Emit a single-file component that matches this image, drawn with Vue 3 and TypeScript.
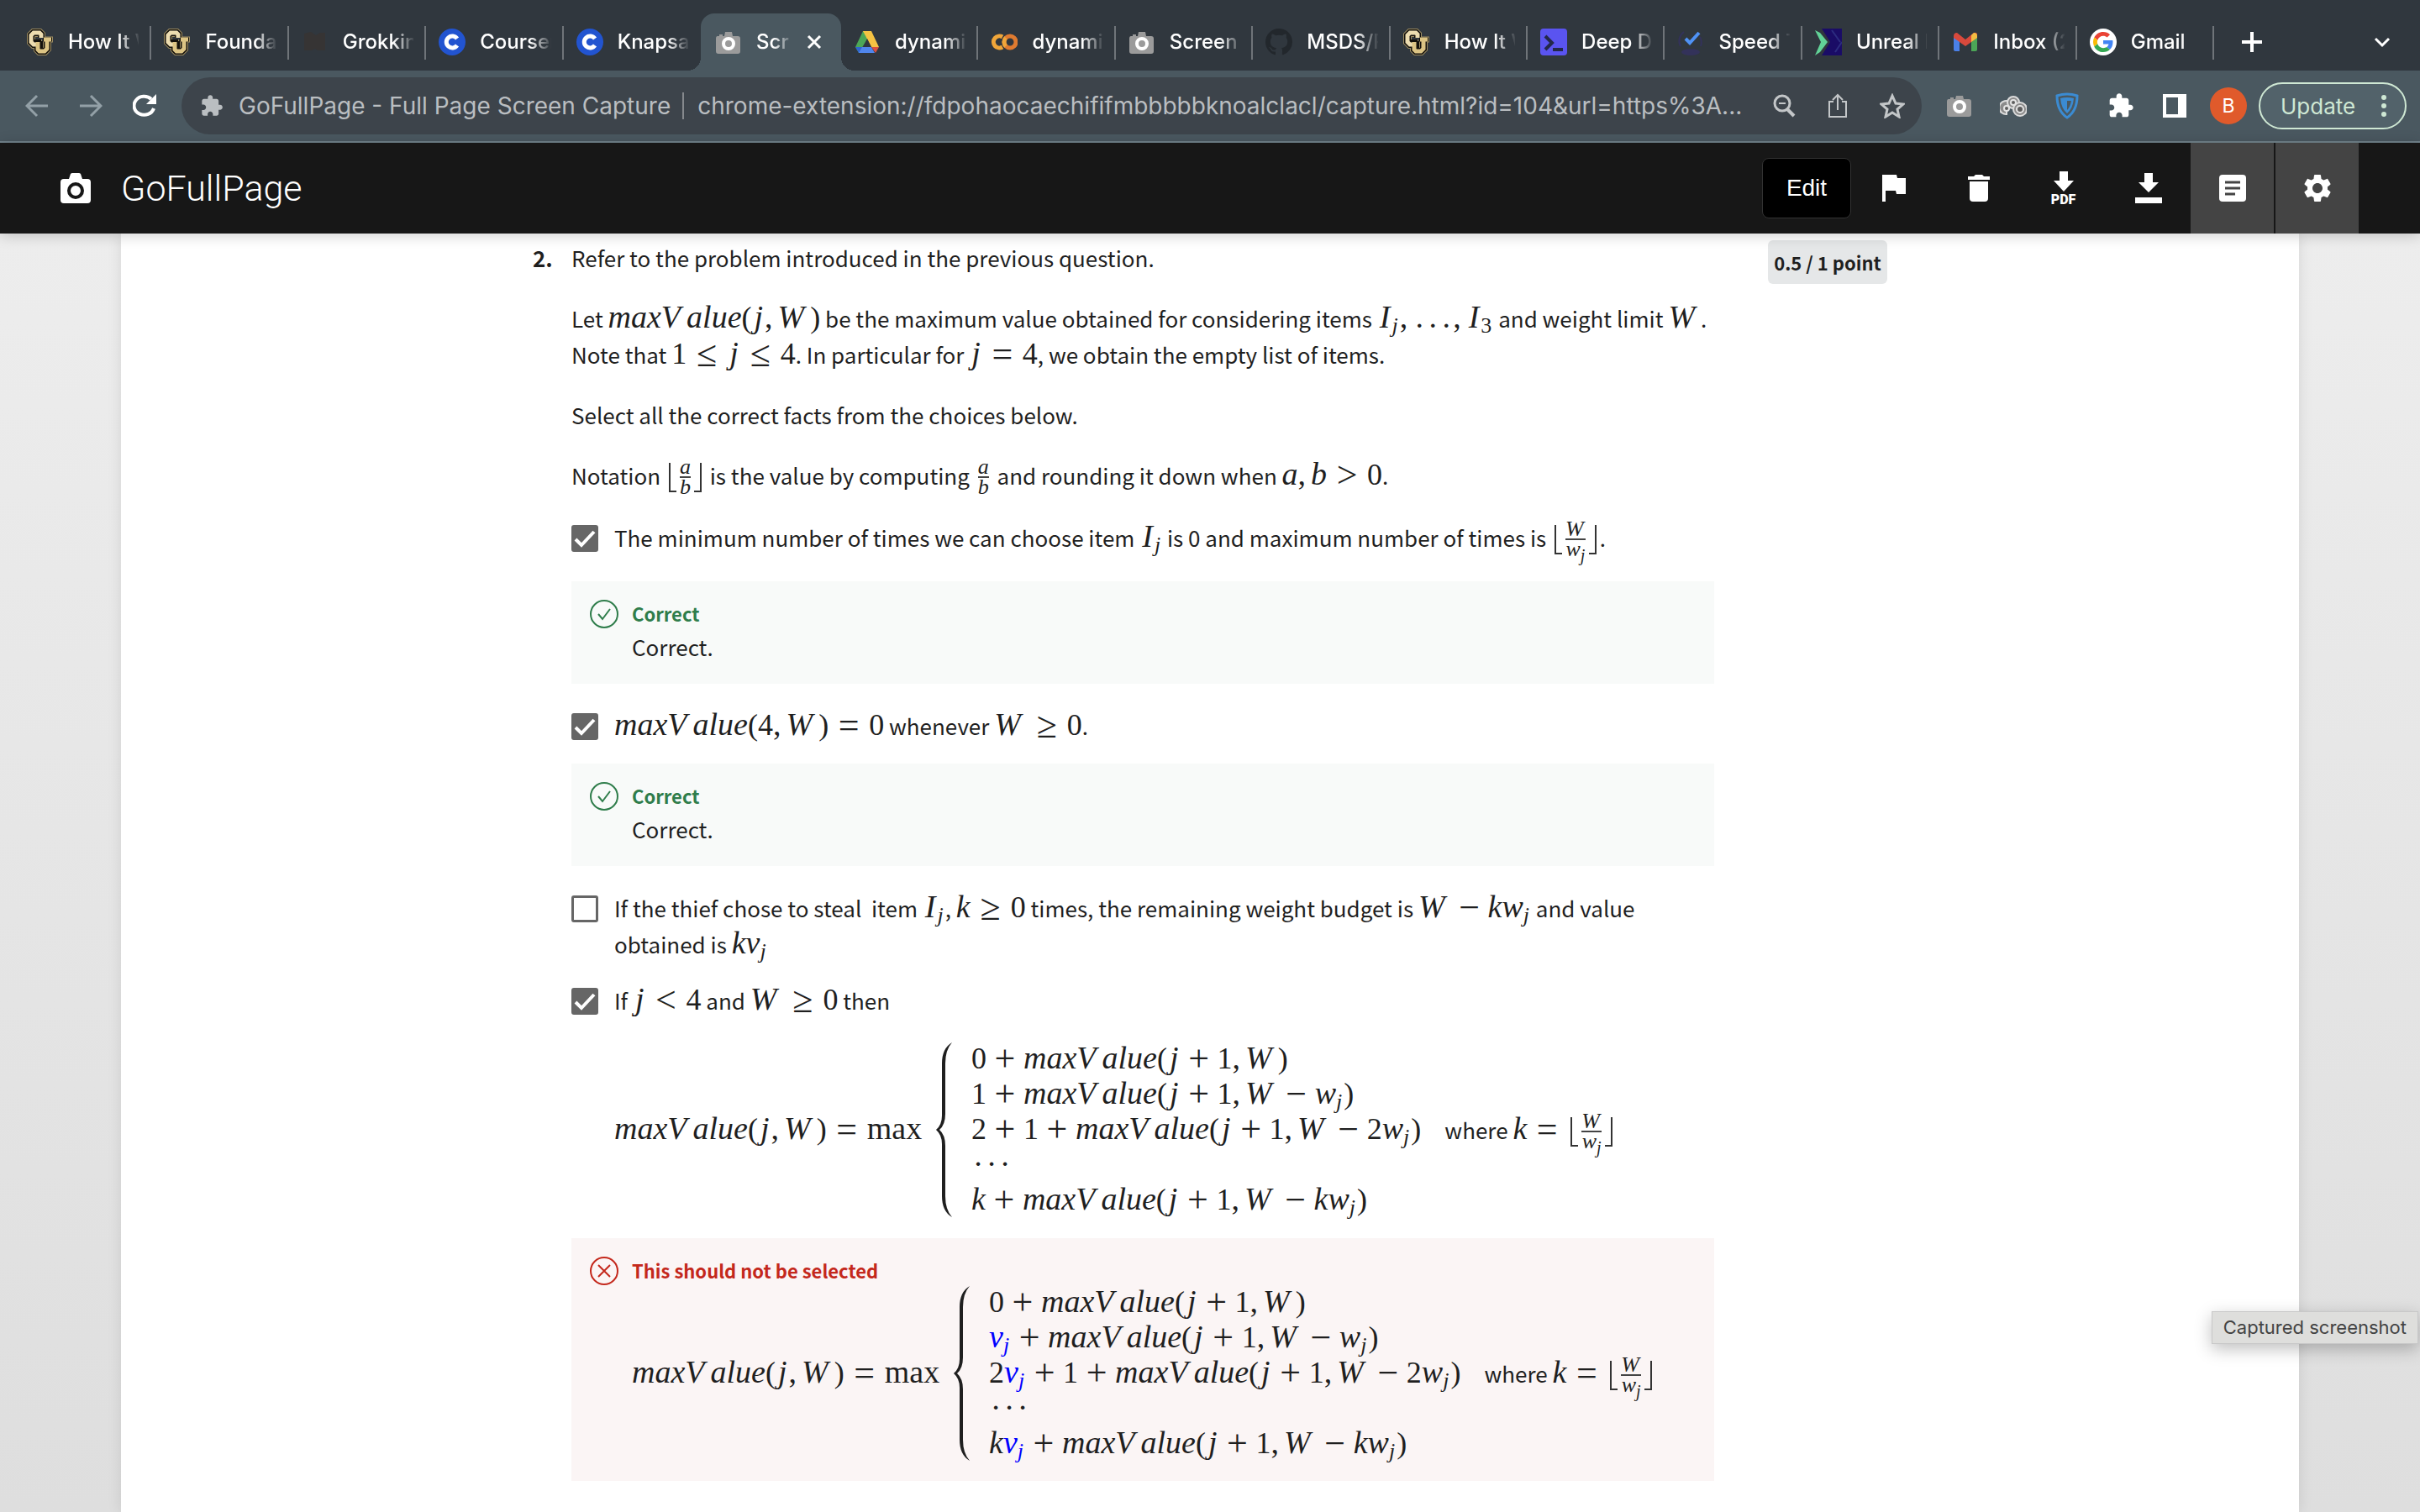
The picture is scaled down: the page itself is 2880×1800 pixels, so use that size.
<script setup lang="ts">
import { h, ref, type FunctionalComponent, type VNode } from 'vue'

interface Tab {
  title: string
  icon: string
  active?: boolean
}

const tabs: Tab[] = [
  { title: 'How It W', icon: 'cu' },
  { title: 'Foundat', icon: 'cu' },
  { title: 'Grokkin', icon: 'grok' },
  { title: 'Courser', icon: 'coursera' },
  { title: 'Knapsa', icon: 'coursera' },
  { title: 'Scr', icon: 'camera', active: true },
  { title: 'dynamic', icon: 'drive' },
  { title: 'dynamic', icon: 'colab' },
  { title: 'Screen', icon: 'camera' },
  { title: 'MSDS/P', icon: 'github' },
  { title: 'How It W', icon: 'cu' },
  { title: 'Deep D', icon: 'terminal' },
  { title: 'Speed T', icon: 'check' },
  { title: 'Unreal E', icon: 'unreal' },
  { title: 'Inbox (2', icon: 'gmail' },
  { title: 'Gmail', icon: 'google' },
]

const url = ref('chrome-extension://fdpohaocaechififmbbbbbknoalclacl/capture.html?id=104&url=https%3A...')
const picked = ref([true, true, false, true])

const puzzle =
  'M20.5 11H19V7c0-1.1-.9-2-2-2h-4V3.5C13 2.12 11.88 1 10.5 1S8 2.12 8 3.5V5H4c-1.1 0-1.99.9-1.99 2v3.8H3.5c1.49 0 2.7 1.21 2.7 2.7s-1.21 2.7-2.7 2.7H2V20c0 1.1.9 2 2 2h3.8v-1.5c0-1.49 1.21-2.7 2.7-2.7 1.49 0 2.7 1.21 2.7 2.7V22H17c1.1 0 2-.9 2-2v-4h1.5c1.38 0 2.5-1.12 2.5-2.5S21.88 11 20.5 11z'

// Small formula notation: letters are italic, _x is a subscript,
// [a/b] a fraction, ⌊a/b⌋ a floored fraction, {..} a highlighted part.
const tokenRe =
  /⌊(.+?)\/(.+?)⌋|\[(.+?)\/(.+?)\]|\{(.+?)\}|(\\max)|_(.)|([=≤≥<>])|([+−])|(,)|([.·])|([VW])|([jI])|([a-zA-Z])|([\d()]+)/g

function frac(a: string, b: string): VNode {
  return h('span', { class: 'frac' }, [
    h('span', { class: 'num' }, parse(a)),
    h('span', { class: 'den' }, parse(b)),
  ])
}

function parse(src: string): VNode[] {
  const out: VNode[] = []
  for (const m of src.matchAll(tokenRe)) {
    if (m[1]) out.push(h('span', { class: 'floor' }, [frac(m[1], m[2])]))
    else if (m[3]) out.push(frac(m[3], m[4]))
    else if (m[5]) out.push(h('span', { class: 'hot' }, parse(m[5])))
    else if (m[6]) out.push(h('span', 'max'))
    else if (m[7]) out.push(h('sub', /\d/.test(m[7]) ? m[7] : [h('i', m[7])]))
    else if (m[8]) out.push(h('span', { class: 'rel' }, m[8]))
    else if (m[9]) out.push(h('span', { class: 'bin' }, m[9]))
    else if (m[10]) out.push(h('span', { class: 'comma' }, ','))
    else if (m[11]) out.push(h('span', { class: 'dot' }, m[11]))
    else if (m[12]) out.push(h('i', { class: 'cap' }, m[12]))
    else if (m[13]) out.push(h('i', { class: 'slim' }, m[13]))
    else if (m[14]) out.push(h('i', m[14]))
    else out.push(h('span', { class: 'rm' }, m[0]))
  }
  return out
}

const Tex: FunctionalComponent<{ f: string }> = (props) => h('span', { class: 'math' }, parse(props.f))
Tex.props = ['f']

const casesA = ['0+maxValue(j+1,W)', '1+maxValue(j+1,W−w_j)', '2+1+maxValue(j+1,W−2w_j)', '···', 'k+maxValue(j+1,W−kw_j)']
const casesB = ['0+maxValue(j+1,W)', '{v_j}+maxValue(j+1,W−w_j)', '2{v_j}+1+maxValue(j+1,W−2w_j)', '···', 'k{v_j}+maxValue(j+1,W−kw_j)']
</script>

<template>
  <div class="window">
    <nav class="tabstrip" aria-label="Tabs">
      <div class="tabs">
        <div v-for="(t, i) in tabs" :key="i" class="tab" :class="{ active: t.active, bare: i === 4 }">
          <svg class="fav" viewBox="0 0 32 32" aria-hidden="true">
            <g v-if="t.icon === 'cu'" fill="none">
              <g stroke="#9c8c62" stroke-width="10"><path d="M17 10V7l-2-2H8L5 8v8l3 3h5" /><path d="M13 13v12l2 2h6l3-3V12" /><path d="M20 13h11" stroke-width="7" /></g>
              <g stroke="#14110c" stroke-width="8"><path d="M17 11V7l-2-2H8L5 8v8l3 3h5" /><path d="M13 13v12l2 2h6l3-3V12" /><path d="M19 13h11" stroke-width="5" /></g>
              <path stroke="#ecdcb0" stroke-width="5" d="M17 11V7l-2-2H8L5 8v8l3 3h4" />
              <path stroke="#dcc484" stroke-width="5" d="M13 16v9l2 2h6l3-3V13M20 13h9" />
              <path stroke="#14110c" stroke-width="2" d="M10 15h6M18 15v8" />
            </g>
            <path v-else-if="t.icon === 'grok'" fill="#363434" d="M3 6l8-2 6 4 5-3h6v21h-9l-3-2-4 2H3z" />
            <g v-else-if="t.icon === 'coursera'">
              <circle cx="16" cy="16" r="16" fill="#2254d0" />
              <path d="M22 12a7 7 0 1 0 0 8" fill="none" stroke="#fff" stroke-width="5" />
            </g>
            <g v-else-if="t.icon === 'camera'">
              <path fill="#9b9b9b" d="M3 9h2V7h4v2h2l1-5h8l1 5h6q3 0 3 3v15q0 3-3 3H4q-3 0-3-3V12q0-3 2-3z" />
              <circle cx="16" cy="18" r="6" fill="#9b9b9b" stroke="#fff" stroke-width="4" />
            </g>
            <g v-else-if="t.icon === 'drive'">
              <path fill="#4ca657" d="M11 3h5l3 5L6 29 2 22z" />
              <path fill="#f5c343" d="M11 3h10l9 19H21z" />
              <path fill="#2f64d0" d="M2 22h9l-4 7H6z" />
              <path fill="#5086ec" d="M10 22h11l4 7H6z" />
              <path fill="#d95040" d="M21 22h9l-4 7z" />
              <path fill="#30373e" d="M16 12l5 10H11z" />
            </g>
            <g v-else-if="t.icon === 'colab'" fill="none" stroke-width="5">
              <path stroke="#f0a63a" d="M14 10a7 7 0 1 0 0 12" />
              <circle cx="23" cy="16" r="7" stroke="#e07b30" />
              <path stroke="#f0a63a" d="M18 11a7 7 0 0 0 0 10" />
            </g>
            <path v-else-if="t.icon === 'github'" fill="#22272c" transform="scale(2)" d="M8 0C3.58 0 0 3.58 0 8c0 3.54 2.29 6.53 5.47 7.59.4.07.55-.17.55-.38 0-.19-.01-.82-.01-1.49-2.01.37-2.53-.49-2.69-.94-.09-.23-.48-.94-.82-1.13-.28-.15-.68-.52-.01-.53.63-.01 1.08.58 1.23.82.72 1.21 1.87.87 2.33.66.07-.52.28-.87.51-1.07-1.78-.2-3.64-.89-3.64-3.95 0-.87.31-1.59.82-2.15-.08-.2-.36-1.02.08-2.12 0 0 .67-.21 2.2.82.64-.18 1.32-.27 2-.27s1.36.09 2 .27c1.53-1.04 2.2-.82 2.2-.82.44 1.1.16 1.92.08 2.12.51.56.82 1.27.82 2.15 0 3.07-1.87 3.75-3.65 3.95.29.25.54.73.54 1.48 0 1.07-.01 1.93-.01 2.2 0 .21.15.46.55.38A8.01 8.01 0 0 0 16 8c0-4.42-3.58-8-8-8z" />
            <g v-else-if="t.icon === 'terminal'">
              <rect width="32" height="32" rx="4" fill="#5a54f0" />
              <path d="M6 9l8 8-8 8M15 25h12" fill="none" stroke="#23284a" stroke-width="4" />
            </g>
            <g v-else-if="t.icon === 'check'">
              <path d="M8 4a13 13 0 0 0-4 17M27 10a13 13 0 0 1 1 11" fill="none" stroke="#33325a" stroke-width="2" />
              <ellipse cx="16" cy="28" rx="11" ry="4" fill="#33325a" />
              <path d="M10 12l5 5L26 5" fill="none" stroke="#4f92f5" stroke-width="4" />
            </g>
            <g v-else-if="t.icon === 'unreal'">
              <path fill="#1a0c66" d="M8 0h24v32H8l10-16z" />
              <path fill="#62d297" d="M0 2l6 3 9 11-9 12-6 4 7-16z" />
              <path d="M20 2l10 14M32 16l-8 12" stroke="#2c2c80" stroke-width="2" />
            </g>
            <g v-else-if="t.icon === 'gmail'">
              <path fill="#4a80e8" d="M2 10l7 5v12H4q-2 0-2-2z" />
              <path fill="#4ca657" d="M30 10l-7 5v12h5q2 0 2-2z" />
              <path fill="#d8493c" d="M2 9q0-4 4-4l10 8 10-8q2-1 4 1v5l-14 10L2 11z" />
              <path fill="#f2bd42" d="M23 8l3-3q4 0 4 4v2l-7 5z" />
            </g>
            <g v-else>
              <circle cx="16" cy="16" r="16" fill="#fff" />
              <g transform="translate(4 4) scale(.5)">
                <path fill="#ea4335" d="M24 9.500c3.540 0 6.710 1.220 9.210 3.600l6.850-6.850C35.900 2.380 30.470 0 24 0 14.620 0 6.510 5.380 2.560 13.220l7.980 6.190C12.430 13.720 17.740 9.500 24 9.500z" />
                <path fill="#4285f4" d="M46.980 24.550c0-1.570-.15-3.090-.38-4.550H24v9.020h12.940c-.58 2.960-2.260 5.480-4.780 7.180l7.730 6c4.510-4.180 7.090-10.360 7.090-17.650z" />
                <path fill="#fbbc05" d="M10.530 28.590c-.48-1.450-.76-2.990-.76-4.590s.27-3.140.76-4.590l-7.980-6.190C.92 16.460 0 20.120 0 24c0 3.880.92 7.540 2.560 10.780l7.970-6.190z" />
                <path fill="#34a853" d="M24 48c6.480 0 11.930-2.130 15.890-5.810l-7.730-6c-2.150 1.450-4.920 2.300-8.160 2.300-6.260 0-11.570-4.220-13.470-9.910l-7.980 6.190C6.510 42.620 14.620 48 24 48z" />
              </g>
            </g>
          </svg>
          <span class="tab-title">{{ t.title }}</span>
          <button v-if="t.active" class="plain" aria-label="Close tab">
            <svg width="18" height="18" viewBox="0 0 18 18"><path d="M2 2l14 14M16 2L2 16" stroke="#fff" stroke-width="3" /></svg>
          </button>
        </div>
      </div>
      <div class="strip-end">
        <button class="plain" aria-label="New tab">
          <svg width="24" height="24" viewBox="0 0 24 24"><path d="M12 0v24M0 12h24" stroke="#fff" stroke-width="4" /></svg>
        </button>
        <button class="plain" aria-label="Search tabs">
          <svg width="20" height="14" viewBox="0 0 20 14"><path d="M2 3l8 8 8-8" fill="none" stroke="#fff" stroke-width="3" /></svg>
        </button>
      </div>
    </nav>

    <div class="toolbar">
      <div class="nav-buttons">
        <button class="plain" aria-label="Back">
          <svg width="28" height="28" viewBox="0 0 28 28" fill="none" stroke="#93a0a7" stroke-width="3"><path d="M27 14H3M14 2L2 14l12 12" /></svg>
        </button>
        <button class="plain" aria-label="Forward">
          <svg width="28" height="28" viewBox="0 0 28 28" fill="none" stroke="#93a0a7" stroke-width="3"><path d="M1 14h24M14 2l12 12-12 12" /></svg>
        </button>
        <button class="plain" aria-label="Reload">
          <svg width="28" height="28" viewBox="0 0 28 28"><path d="M25 17a12 11 0 1 1-3-11" fill="none" stroke="#fff" stroke-width="4" /><path d="M28 0v12H16z" fill="#fff" /></svg>
        </button>
      </div>
      <div class="omnibox">
        <svg width="28" height="28" viewBox="0 0 24 24" fill="#babec1"><path :d="puzzle" /></svg>
        <span class="ext-name">GoFullPage - Full Page Screen Capture</span>
        <input v-model="url" class="url" aria-label="Address" />
        <button class="plain" aria-label="Zoom">
          <svg width="28" height="28" viewBox="0 0 28 28" fill="none" stroke="#c3c6c8" stroke-width="3"><circle cx="12" cy="11" r="9" /><path d="M18 18l8 8" stroke-width="4" /><path d="M8 11h8" stroke-width="2" /></svg>
        </button>
        <button class="plain" aria-label="Share">
          <svg width="28" height="30" viewBox="0 0 28 30" fill="none" stroke="#c3c6c8" stroke-width="2"><path d="M9 10H4v18h20V10h-5M14 20V3M8 8l6-6 6 6" /></svg>
        </button>
        <button class="plain" aria-label="Bookmark">
          <svg width="30" height="30" viewBox="0 0 30 30" fill="none" stroke="#c3c6c8" stroke-width="3"><path d="M15 3l4 9 9 1-7 6 2 9-8-5-8 5 2-9-7-6 9-1z" /></svg>
        </button>
      </div>
      <div class="extensions">
        <button class="plain" aria-label="GoFullPage">
          <svg width="32" height="32" viewBox="0 0 32 32"><path fill="#9b9b9b" d="M3 8h2V6h4v2h2l1-4h8l1 4h6q3 0 3 3v15q0 3-3 3H4q-3 0-3-3V11q0-3 2-3z" /><circle cx="16" cy="17" r="6" fill="#9b9b9b" stroke="#fff" stroke-width="4" /></svg>
        </button>
        <button class="plain" aria-label="Extension">
          <svg width="32" height="32" viewBox="0 0 32 32" fill="none">
            <g fill="#8b8b8b" stroke="#dcdcdc" stroke-width="2"><path d="M8 26A8 8 0 1 1 15 16L8 19z" /><circle cx="16" cy="12" r="7" /><circle cx="24" cy="20" r="8" /></g>
            <g fill="#5d5d5d" stroke="#e4e4e4" stroke-width="2"><circle cx="16" cy="12" r="3" /><circle cx="24" cy="20" r="4" /><circle cx="8" cy="19" r="3" /></g>
          </svg>
        </button>
        <button class="plain" aria-label="Shield">
          <svg width="28" height="32" viewBox="0 0 28 32" fill="none" stroke="#3b8bd2" stroke-width="3"><path d="M14 2q6 0 12 2 0 18-12 26Q2 22 2 4q6-2 12-2z" /><path fill="#3b8bd2" fill-rule="evenodd" stroke="none" d="M14 6q4 0 8 1-1 12-8 18Q7 19 6 7q4-1 8-1zM14 10v11q4-4 5-11z" /></svg>
        </button>
        <button class="plain" aria-label="Extensions">
          <svg width="32" height="32" viewBox="0 0 24 24" fill="#fff"><path :d="puzzle" /></svg>
        </button>
        <button class="plain" aria-label="Side panel">
          <svg width="28" height="28" viewBox="0 0 28 28"><path fill="#fff" fill-rule="evenodd" d="M0 0h28v28H0zM4 4v20h14V4z" /></svg>
        </button>
        <button class="avatar">B</button>
      </div>
      <button class="update">
        Update
        <svg width="6" height="28" viewBox="0 0 6 28" fill="#cfe8d4"><circle cx="3" cy="4" r="3" /><circle cx="3" cy="14" r="3" /><circle cx="3" cy="24" r="3" /></svg>
      </button>
    </div>

    <header class="app-bar">
      <svg class="logo" width="36" height="36" viewBox="0 0 36 36"><path fill="#fff" fill-rule="evenodd" d="M4 7h6l2-6q1-1 2-1h8q1 0 2 1l2 6h6q4 0 4 4v21q0 4-4 4H4q-4 0-4-4V11q0-4 4-4zM18 11a10 10 0 1 0 0 20 10 10 0 0 0 0-20zM18 15a6 6 0 1 1 0 12 6 6 0 0 1 0-12z" /></svg>
      <h1>GoFullPage</h1>
      <div class="actions">
        <button class="edit">Edit</button>
        <button class="act" aria-label="Report">
          <svg width="28" height="32" viewBox="0 0 28 32"><path fill="#fff" d="M0 0h17l1 4h10v19H17l-1-4H4v13H0z" /></svg>
        </button>
        <button class="act" aria-label="Delete">
          <svg width="26" height="32" viewBox="0 0 26 32"><path fill="#fff" d="M0 2h7l2-2h8l2 2h7v4H0zM2 8h22v20q0 4-4 4H6q-4 0-4-4z" /></svg>
        </button>
        <button class="act pdf" aria-label="Download PDF">
          <svg width="24" height="24" viewBox="0 0 24 24"><path fill="#fff" d="M7 0h10v11h7L12 24 0 11h7z" /></svg>
          <span>PDF</span>
        </button>
        <button class="act" aria-label="Download">
          <svg width="32" height="36" viewBox="0 0 32 36"><path fill="#fff" d="M11 0h10v11h7L16 23 4 11h7zM0 29h32v7H0z" /></svg>
        </button>
        <button class="act lit" aria-label="Files">
          <svg width="32" height="32" viewBox="0 0 32 32"><rect width="32" height="32" rx="4" fill="#fff" /><path d="M7 9h18M7 16h18M7 23h12" stroke="#444" stroke-width="3" /></svg>
        </button>
        <button class="act lit" aria-label="Options">
          <svg width="40" height="40" viewBox="0 0 24 24" fill="#fff"><path d="M19.140 12.940c.04-.3.060-.61.060-.94 0-.32-.02-.64-.07-.94l2.030-1.580c.18-.14.23-.41.12-.61l-1.920-3.320c-.12-.22-.37-.29-.59-.22l-2.390.96c-.5-.38-1.030-.7-1.620-.94l-.36-2.540c-.04-.24-.24-.41-.48-.41h-3.840c-.24 0-.43.17-.47.41l-.36 2.540c-.59.24-1.130.57-1.620.94l-2.390-.96c-.22-.08-.47 0-.59.22L2.740 8.870c-.12.21-.08.47.12.61l2.030 1.580c-.05.3-.09.63-.09.94s.02.64.07.94l-2.030 1.580c-.18.14-.23.41-.12.61l1.920 3.320c.12.22.37.29.59.22l2.390-.96c.5.38 1.030.7 1.620.94l.36 2.540c.05.24.24.41.48.41h3.840c.24 0 .44-.17.47-.41l.36-2.540c.59-.24 1.130-.56 1.620-.94l2.390.96c.22.08.47 0 .59-.22l1.920-3.320c.12-.22.07-.47-.12-.61l-2.010-1.580zM12 15.600c-1.980 0-3.600-1.620-3.600-3.600s1.620-3.600 3.600-3.600 3.600 1.620 3.600 3.600-1.620 3.600-3.600 3.600z" /></svg>
        </button>
      </div>
    </header>

    <main class="backdrop">
      <article class="sheet">
        <div class="question">
          <strong class="number">2.</strong>
          <div class="body">
            <p>Refer to the problem introduced in the previous question.</p>
            <p>
              Let <Tex f="maxValue(j,W)" /> be the maximum value obtained for considering items <Tex f="I_j,...,I_3" /> and weight limit <Tex f="W" />.<br />
              Note that <Tex f="1≤j≤4" />. In particular for <Tex f="j=4" />, we obtain the empty list of items.
            </p>
            <p>Select all the correct facts from the choices below.</p>
            <p>Notation <Tex f="⌊a/b⌋" /> is the value by computing <Tex f="[a/b]" /> and rounding it down when <Tex f="a,b>0" />.</p>

            <label class="choice tall">
              <input v-model="picked[0]" type="checkbox" />
              <span class="text">The minimum number of times we can choose item <Tex f="I_j" /> is 0 and maximum number of times is <Tex f="⌊W/w_j⌋" />.</span>
            </label>
            <section class="note good">
              <svg width="36" height="36" viewBox="0 0 36 36" fill="none" stroke="#2f7d4b" stroke-width="2"><circle cx="18" cy="18" r="16" /><path d="M11 18l5 6 9-12" /></svg>
              <div><h2>Correct</h2><div>Correct.</div></div>
            </section>

            <label class="choice">
              <input v-model="picked[1]" type="checkbox" />
              <span class="text"><Tex f="maxValue(4,W)=0" /> whenever <Tex f="W≥0" />.</span>
            </label>
            <section class="note good">
              <svg width="36" height="36" viewBox="0 0 36 36" fill="none" stroke="#2f7d4b" stroke-width="2"><circle cx="18" cy="18" r="16" /><path d="M11 18l5 6 9-12" /></svg>
              <div><h2>Correct</h2><div>Correct.</div></div>
            </section>

            <label class="choice">
              <input v-model="picked[2]" type="checkbox" />
              <span class="text">If the thief chose to steal&nbsp; item <Tex f="I_j" />, <Tex f="k≥0" /> times, the remaining weight budget is <Tex f="W−kw_j" /> and value<br />obtained is <Tex f="kv_j" /></span>
            </label>

            <label class="choice">
              <input v-model="picked[3]" type="checkbox" />
              <span class="text">
                If <Tex f="j<4" /> and <Tex f="W≥0" /> then
                <span class="formula">
                  <span class="lead"><Tex f="maxValue(j,W)=\max" /></span>
                  <svg class="brace" viewBox="0 0 20 210"><path d="M20 1Q8 8 8 26V88Q8 99 1 105Q8 111 8 122V184Q8 202 20 209Q12 200 12 184V124Q12 111 5 105Q12 99 12 86V26Q12 10 20 1z" /></svg>
                  <span class="cases">
                    <span v-for="(c, i) in casesA" :key="i" class="case">
                      <Tex :f="c" /><span v-if="i === 2" class="where">where <Tex f="k=⌊W/w_j⌋" /></span>
                    </span>
                  </span>
                </span>
              </span>
            </label>
            <section class="note bad">
              <svg width="36" height="36" viewBox="0 0 36 36" fill="none" stroke="#c4281c" stroke-width="2"><circle cx="18" cy="18" r="16" /><path d="M11 11l14 14M25 11L11 25" /></svg>
              <div>
                <h2>This should not be selected</h2>
                <span class="formula">
                  <span class="lead"><Tex f="maxValue(j,W)=\max" /></span>
                  <svg class="brace" viewBox="0 0 20 210"><path d="M20 1Q8 8 8 26V88Q8 99 1 105Q8 111 8 122V184Q8 202 20 209Q12 200 12 184V124Q12 111 5 105Q12 99 12 86V26Q12 10 20 1z" /></svg>
                  <span class="cases">
                    <span v-for="(c, i) in casesB" :key="i" class="case">
                      <Tex :f="c" /><span v-if="i === 2" class="where">where <Tex f="k=⌊W/w_j⌋" /></span>
                    </span>
                  </span>
                </span>
              </div>
            </section>
          </div>
          <div class="points">0.5 / 1 point</div>
        </div>
      </article>
      <div class="tooltip" role="tooltip">Captured screenshot</div>
    </main>
  </div>
</template>

<style>
body {
  margin: 0;
}

.math {
  font-family: 'Liberation Serif', serif;
  font-size: 38px;
  line-height: 0;
  white-space: nowrap;
}
.math .cap {
  margin-right: 7px;
}
.math .slim {
  margin: 0 2px 0 3px;
}
.math .rm {
  font-size: 36px;
}
.math .rel,
.math .bin {
  display: inline-block;
  width: 48px;
  font-size: 44px;
  text-align: center;
  vertical-align: -3px;
}
.math .bin {
  width: 44px;
}
.math .comma {
  margin-right: 6px;
}
.math .dot {
  display: inline-block;
  width: 16px;
  text-align: center;
}
.math sub {
  margin: 0 2px 0 0;
  font-size: 26px;
  line-height: 0;
  vertical-align: -6px;
}
.math .hot {
  color: #0000ff;
}
.math .frac {
  display: inline-flex;
  flex-direction: column;
  margin: -10px 4px;
  font-size: 26px;
  line-height: 22px;
  text-align: center;
  vertical-align: middle;
}
.math .frac .num {
  border-bottom: 2px solid #444;
}
.math .frac sub {
  margin: 0;
  font-size: 20px;
}
.math .frac .cap {
  margin-right: 2px;
}
.math .frac .slim {
  margin: 0;
}
.math .floor {
  display: inline-flex;
  align-items: center;
  margin: -10px 4px;
  vertical-align: middle;
}
.math .floor::before,
.math .floor::after {
  content: '';
  width: 7px;
  height: 33px;
  border: solid #333;
  border-width: 0 0 2px 2px;
}
.math .floor::after {
  border-width: 0 2px 2px 0;
}
</style>

<style scoped>
.window {
  display: flex;
  flex-direction: column;
  min-height: 100vh;
  font-family: Inter, sans-serif;
}
button {
  font-family: inherit;
}
.plain {
  display: flex;
  align-items: center;
  justify-content: center;
  padding: 0;
  border: 0;
  background: none;
}

/* tab strip */
.tabstrip {
  display: flex;
  height: 84px;
  background: #30373e;
  color: #fff;
}
.tabs {
  display: flex;
  flex: 1;
  min-width: 0;
  padding: 16px 0 0 17px;
}
.tab {
  position: relative;
  display: flex;
  flex: 1 1 0;
  align-items: center;
  gap: 17px;
  box-sizing: border-box;
  min-width: 0;
  padding: 0 15px;
}
.tab::after {
  content: '';
  position: absolute;
  top: 15px;
  right: 0;
  width: 2px;
  height: 40px;
  background: #6f7479;
}
.tab.bare::after {
  display: none;
}
.tab.active {
  flex: 0 0 167px;
  padding: 0 23px 0 17px;
  border-radius: 16px 16px 0 0;
  background: #4a5860;
}
.tab.active::before,
.tab.active::after {
  content: '';
  position: absolute;
  top: auto;
  bottom: 0;
  width: 16px;
  height: 16px;
}
.tab.active::before {
  left: -16px;
  background: radial-gradient(circle at 0 0, transparent 16px, #4a5860 16px);
}
.tab.active::after {
  right: -16px;
  background: radial-gradient(circle at 100% 0, transparent 16px, #4a5860 16px);
}
.fav {
  flex: none;
  width: 32px;
  height: 32px;
}
.tab-title {
  flex: 1;
  overflow: hidden;
  min-width: 0;
  font-size: 24px;
  font-weight: 500;
  line-height: 32px;
  white-space: nowrap;
  -webkit-mask-image: linear-gradient(to right, #000 60px, transparent 86px);
  mask-image: linear-gradient(to right, #000 60px, transparent 86px);
}
.tab.active .tab-title {
  -webkit-mask-image: linear-gradient(to right, #000 20px, transparent 44px);
  mask-image: linear-gradient(to right, #000 20px, transparent 44px);
}
.strip-end {
  display: flex;
  align-items: center;
  justify-content: space-between;
  box-sizing: border-box;
  width: 245px;
  padding: 16px 35px 0 33px;
}

/* toolbar */
.toolbar {
  display: flex;
  align-items: center;
  height: 84px;
  border-bottom: 2px solid #71828b;
  background: #4a5860;
}
.nav-buttons {
  display: flex;
  gap: 36px;
  padding: 0 30px;
}
.omnibox {
  display: flex;
  flex: 1;
  align-items: center;
  gap: 36px;
  box-sizing: border-box;
  min-width: 0;
  height: 68px;
  padding: 0 20px 0 22px;
  border-radius: 34px;
  background: #3d444b;
  color: #babec1;
  font-size: 28px;
}
.ext-name {
  margin-left: -18px;
  padding-right: 14px;
  border-right: 2px solid #85898d;
  line-height: 32px;
  white-space: nowrap;
}
.url {
  flex: 1;
  min-width: 0;
  margin-left: -20px;
  padding: 0;
  border: 0;
  outline: 0;
  background: none;
  color: inherit;
  font: inherit;
}
.extensions {
  display: flex;
  align-items: center;
  padding: 0 10px 0 13px;
}
.extensions .plain {
  width: 64px;
}
.avatar {
  width: 44px;
  height: 44px;
  margin-left: 10px;
  padding: 0;
  border: 0;
  border-radius: 50%;
  background: #e05a2b;
  color: #fff;
  font-size: 23px;
}
.update {
  display: flex;
  align-items: center;
  justify-content: space-between;
  box-sizing: border-box;
  width: 176px;
  height: 56px;
  margin: 0 16px 0 4px;
  padding: 0 22px 0 24px;
  border: 2px solid #cfe8d4;
  border-radius: 28px;
  background: #52626a;
  color: #cfe8d4;
  font-size: 26px;
}

/* extension header */
.app-bar {
  position: relative;
  z-index: 1;
  display: flex;
  align-items: center;
  height: 108px;
  padding: 0 71px 0 72px;
  background: #171717;
  box-shadow: 0 2px 16px rgba(0, 0, 0, 0.2);
  color: #fff;
}
h1 {
  flex: 1;
  margin: 0 0 0 36px;
  font-family: Roboto, sans-serif;
  font-size: 43px;
  font-weight: 300;
}
.actions {
  display: flex;
  align-self: stretch;
  align-items: center;
}
.edit {
  width: 106px;
  height: 72px;
  border: 1px solid #333;
  border-radius: 8px;
  background: #000;
  color: #fff;
  font-family: 'Liberation Sans', sans-serif;
  font-size: 28px;
}
.act {
  display: flex;
  flex-direction: column;
  align-items: center;
  justify-content: center;
  box-sizing: border-box;
  width: 101px;
  height: 100%;
  padding: 0;
  border: 0;
  background: none;
}
.act.lit {
  border-right: 2px solid #171717;
  background: #444;
}
.act.pdf span {
  margin-top: 3px;
  color: #fff;
  font-family: Roboto, sans-serif;
  font-size: 16px;
  font-weight: 900;
  line-height: 14px;
}

/* page */
.backdrop {
  position: relative;
  display: flex;
  flex: 1;
  flex-direction: column;
  padding: 0 5%;
  background: linear-gradient(#ededed, #dedede);
}
.sheet {
  flex: 1;
  padding: 7px 40px 8px;
  background: #fff;
  box-shadow: 0 0 16px rgba(0, 0, 0, 0.1);
}
.question {
  display: flex;
  align-items: flex-start;
  max-width: 1612px;
  margin: 0 auto;
  color: #1f1f1f;
  font-family: 'Noto Sans CJK SC', sans-serif;
  font-size: 26px;
  line-height: 43px;
}
.number {
  flex: none;
  width: 46px;
}
.body {
  flex: 1;
  min-width: 0;
}
p {
  margin: 0 -40px 29px 0;
}
.points {
  flex: none;
  box-sizing: border-box;
  width: 142px;
  margin: 1px 0 0 64px;
  border-radius: 6px;
  background: #e5e7e8;
  font-size: 22px;
  font-weight: 700;
  line-height: 52px;
  text-align: center;
  white-space: nowrap;
}
.choice {
  display: flex;
  gap: 19px;
  margin: 24px 0;
}
.choice.tall {
  margin: 31px 0;
}
.choice input {
  flex: none;
  box-sizing: border-box;
  width: 32px;
  height: 32px;
  margin: 7px 0 0;
  border: 3px solid #666;
  border-radius: 3px;
  appearance: none;
  background: #fff;
}
.choice input:checked {
  background: #666
    url("data:image/svg+xml,%3Csvg xmlns='http://www.w3.org/2000/svg' viewBox='0 0 26 26'%3E%3Cpath d='M2 14l7 7L24 5' fill='none' stroke='%23fff' stroke-width='4'/%3E%3C/svg%3E")
    center / 26px no-repeat;
}
.text {
  flex: 1;
}
.note {
  display: flex;
  gap: 15px;
  margin-bottom: 28px;
  padding: 21px 21px 23px;
}
.note.good {
  background: #f8faf9;
}
.note.bad {
  background: #fbf5f5;
}
.note > svg {
  flex: none;
}
h2 {
  margin: 0 0 1px;
  font-size: 22px;
  font-weight: 700;
  line-height: 34px;
}
.good h2 {
  color: #2f7d4b;
}
.bad h2 {
  color: #c4281c;
}
.formula {
  display: flex;
  align-items: center;
  line-height: 42px;
}
.choice .formula {
  margin-top: 28px;
}
.lead {
  flex: none;
  width: 382px;
}
.brace {
  flex: none;
  width: 20px;
  height: 210px;
  margin-right: 23px;
  fill: #1f1f1f;
}
.case {
  display: block;
  height: 42px;
  white-space: nowrap;
}
.where {
  margin-left: 28px;
}
.tooltip {
  position: absolute;
  right: 2px;
  bottom: 200px;
  z-index: 2;
  padding: 0 13px;
  border: 1px solid #c8c8c8;
  background: #dededc;
  box-shadow: 0 6px 20px rgba(0, 0, 0, 0.25);
  color: #444;
  font-size: 22px;
  line-height: 37px;
}
</style>
